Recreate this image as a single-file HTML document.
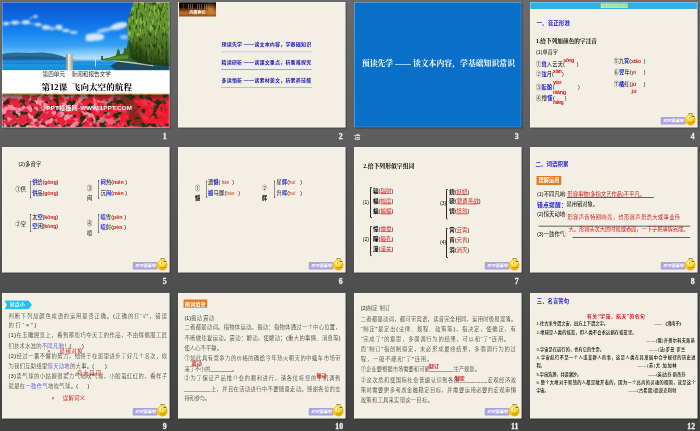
<!DOCTYPE html>
<html lang="zh-CN">
<head>
<meta charset="utf-8">
<title>飞向太空的航程 PPT</title>
<style>
html,body{margin:0;padding:0;}
body{width:700px;height:431px;overflow:hidden;position:relative;background:linear-gradient(to bottom,#6b6b6b 0%,#414141 100%);font-family:"Liberation Sans","Noto Sans CJK SC",sans-serif;}
.s{position:absolute;width:670px;height:502px;transform:scale(.25);transform-origin:0 0;overflow:hidden;box-shadow:3px 3px 4px rgba(0,0,0,.5);}
.s::after{content:"";position:absolute;left:0;top:0;right:0;bottom:0;box-shadow:inset 0 0 0 3px rgba(255,255,255,.38);}
.t{position:absolute;white-space:nowrap;line-height:1;font-weight:300;}
.b{font-weight:bold;}
.f{font-family:"Liberation Serif","Noto Serif CJK SC",serif;}
.r{color:#d01818;font-weight:400;}
.rb{color:#d01818;font-weight:bold;}
.u{color:#1616e4;font-weight:bold;}
.n{position:absolute;color:#f0f0f0;font:bold 31px/1 "Liberation Serif","Noto Serif CJK SC",serif;-webkit-text-stroke:1.2px #f0f0f0;transform:scale(.25);transform-origin:100% 0;white-space:nowrap;text-align:right;}
.br{position:absolute;border:4px solid #2a2a2a;border-right:none;border-radius:7px 0 0 7px;box-sizing:border-box;}
.ul{position:absolute;height:3.2px;background:#1a1a1a;}
.btn{position:absolute;left:523px;top:460px;width:99px;height:30px;background:#a9a0e2;border-radius:3px;color:#fff;font:italic bold 17px/30px "Liberation Sans","Noto Sans CJK SC",sans-serif;text-align:center;white-space:nowrap;letter-spacing:-0.5px;}
.sm{position:absolute;left:618px;top:441px;width:45px;height:54px;}
</style>
</head>
<body>
<div class="s" style="left:2px;top:2px;background:#ffffff">
<svg style="position:absolute;left:0;top:0" width="672" height="502" viewBox="2 2 168 125.5" preserveAspectRatio="none">
<defs>
<linearGradient id="sky" x1="0" y1="0" x2="0" y2="1"><stop offset="0" stop-color="#0a56d0"/><stop offset=".3" stop-color="#0e6ce4"/><stop offset=".55" stop-color="#1b88f0"/><stop offset=".75" stop-color="#38a2f4"/><stop offset=".88" stop-color="#74c2f7"/><stop offset="1" stop-color="#b0def9"/></linearGradient>
<radialGradient id="haze" cx=".5" cy="1" r=".9"><stop offset="0" stop-color="#f4fbff" stop-opacity=".95"/><stop offset=".55" stop-color="#d8eefc" stop-opacity=".55"/><stop offset="1" stop-color="#bfe2fa" stop-opacity="0"/></radialGradient>
<linearGradient id="lake" x1="0" y1="0" x2="0" y2="1"><stop offset="0" stop-color="#1782d6"/><stop offset=".45" stop-color="#2098e2"/><stop offset="1" stop-color="#1788d8"/></linearGradient>
<filter id="blur1" x="-.2" y="-.2" width="1.4" height="1.4"><feGaussianBlur stdDeviation=".9"/></filter>
<filter id="blur2" x="-.2" y="-.2" width="1.4" height="1.4"><feGaussianBlur stdDeviation=".5"/></filter>
<filter id="ftree" x="0" y="0" width="1" height="1" color-interpolation-filters="sRGB">
<feTurbulence type="fractalNoise" baseFrequency=".5 .16" numOctaves="2" seed="4" result="n"/>
<feColorMatrix in="n" type="matrix" values="0 0 0 0 .18  0 0 0 0 .32  0 0 0 0 .09  5 0 0 0 -2.5" result="d"/>
<feColorMatrix in="n" type="matrix" values="0 0 0 0 .58  0 0 0 0 .72  0 0 0 0 .26  0 5 0 0 -2.7" result="l"/>
<feMerge result="m"><feMergeNode in="SourceGraphic"/><feMergeNode in="d"/><feMergeNode in="l"/></feMerge>
<feComposite in="m" in2="SourceAlpha" operator="in"/>
</filter>
<filter id="fflow" x="0" y="0" width="1" height="1" color-interpolation-filters="sRGB">
<feTurbulence type="fractalNoise" baseFrequency=".15 .17" numOctaves="2" seed="7" result="n"/>
<feColorMatrix in="n" type="matrix" values="0 0 0 0 .12  0 0 0 0 .19  0 0 0 0 .07  9 0 0 0 -4.75" result="d"/>
<feMerge result="m"><feMergeNode in="SourceGraphic"/><feMergeNode in="d"/></feMerge>
<feComposite in="m" in2="SourceAlpha" operator="in"/>
</filter>
<filter id="fpink" x="0" y="0" width="1" height="1" color-interpolation-filters="sRGB">
<feTurbulence type="fractalNoise" baseFrequency=".14 .16" numOctaves="2" seed="23" result="n"/>
<feColorMatrix in="n" type="matrix" values="0 0 0 0 .98  0 0 0 0 .56  0 0 0 0 .66  0 9 0 0 -4.55" result="p"/>
<feTurbulence type="fractalNoise" baseFrequency=".5" numOctaves="1" seed="11" result="n2"/>
<feColorMatrix in="n2" type="matrix" values="0 0 0 0 1  0 0 0 0 .9  0 0 0 0 .92  0 0 10 0 -7" result="w"/>
<feMerge result="m"><feMergeNode in="p"/><feMergeNode in="w"/></feMerge>
<feComposite in="m" in2="SourceAlpha" operator="in"/>
</filter>
<linearGradient id="flbase" x1="0" y1="0" x2="1" y2="0"><stop offset="0" stop-color="#e02840"/><stop offset=".5" stop-color="#f01c34"/><stop offset="1" stop-color="#f4182c"/></linearGradient>
<linearGradient id="pm" x1="0" y1="0" x2="1" y2="0"><stop offset="0" stop-color="#fff"/><stop offset=".55" stop-color="#fff" stop-opacity=".9"/><stop offset=".75" stop-color="#fff" stop-opacity=".25"/><stop offset="1" stop-color="#fff" stop-opacity=".1"/></linearGradient>
<mask id="pmask" maskUnits="userSpaceOnUse" x="2" y="94" width="168" height="34"><rect x="2" y="94" width="168" height="34" fill="url(#pm)"/></mask>
<linearGradient id="fltop" x1="0" y1="0" x2="0" y2="1"><stop offset="0" stop-color="#1a2408" stop-opacity=".6"/><stop offset="1" stop-color="#1a2408" stop-opacity="0"/></linearGradient>
<linearGradient id="tsh" x1="0" y1="0" x2="0" y2="1"><stop offset="0" stop-color="#18300f" stop-opacity="0"/><stop offset="1" stop-color="#18300f" stop-opacity=".78"/></linearGradient>
</defs>
<!-- sky -->
<rect x="2" y="2" width="168" height="59" fill="url(#sky)"/>
<ellipse cx="100" cy="61" rx="62" ry="20" fill="url(#haze)"/>
<!-- clouds -->
<g fill="#fff" filter="url(#blur1)" opacity=".8">
<ellipse cx="6" cy="23.5" rx="3.2" ry="1.8"/><ellipse cx="15" cy="22.5" rx="3.8" ry="2"/><ellipse cx="26" cy="22.3" rx="4" ry="2.2"/>
<ellipse cx="35.5" cy="16.5" rx="2.2" ry="1.5"/><ellipse cx="31" cy="18" rx="2" ry="1" opacity=".6"/><ellipse cx="38" cy="24.5" rx="3" ry="1.8"/><ellipse cx="46" cy="27.5" rx="4" ry="2.2"/>
<ellipse cx="52" cy="29" rx="3" ry="1.2" opacity=".7"/><ellipse cx="59" cy="27.2" rx="3.4" ry="2.4"/><ellipse cx="66" cy="30.5" rx="3.6" ry="1.6"/><ellipse cx="74" cy="32.5" rx="3.6" ry="1.2"/>
<path d="M3 24 Q20 21 40 25 T76 33" stroke="#fff" stroke-width="1.6" fill="none" opacity=".55"/>
<ellipse cx="95" cy="37" rx="9.5" ry="3.8"/><ellipse cx="90" cy="39.5" rx="4.5" ry="1.8"/><ellipse cx="88.5" cy="36.5" rx="2.5" ry="2.5"/>
<ellipse cx="119" cy="26" rx="9" ry="3.4" transform="rotate(-14 119 26)"/><ellipse cx="105" cy="30" rx="9" ry="2" transform="rotate(-12 105 30)" opacity=".75"/>
<ellipse cx="124" cy="37" rx="4" ry="2" opacity=".7"/>
</g>
<!-- mountains -->
<path d="M2 54 L8 53 L18 52.4 L30 53 L42 52.6 L52 53.6 L60 55.5 L66 57.5 L72 59.5 L80 60.5 L2 60.5Z" fill="#2b6c96"/>
<path d="M2 57 L20 56 L40 56.5 L60 58 L74 60.5 L2 60.5Z" fill="#1f5c88" opacity=".8"/>
<!-- lake -->
<rect x="2" y="59.8" width="168" height="10.6" fill="url(#lake)"/>
<rect x="72" y="59.8" width="46" height="1.6" fill="#9ad4f4" opacity=".6"/>
<rect x="2" y="63" width="64" height="1.2" fill="#1170c4" opacity=".55"/>
<rect x="74" y="65.5" width="40" height="1.2" fill="#1170c4" opacity=".4"/>
<!-- post -->
<rect x="66.2" y="53.9" width="6.4" height="16.5" fill="#c9c9c2"/><rect x="66.2" y="53.9" width="1.3" height="16.5" fill="#8e8e88"/><rect x="68" y="53.9" width="1.8" height="16.5" fill="#e6e6e0"/><rect x="71.4" y="53.9" width="1.2" height="16.5" fill="#a2a29a"/>
<rect x="95" y="59" width=".9" height="7.5" fill="#e6f2fa" opacity=".85"/>
<!-- far shore & small trees -->
<path d="M100 60 L104 58.8 L110 57.5 L116 55.5 L117.3 50 L118.3 48.8 L119.3 50 L120.5 54.5 L123.5 53 L124.3 48.5 L125.3 47.5 L126.3 49 L127 46 L128 40.5 L129.2 39.8 L130.5 44 L132 48 L170 48 L170 66 L150 64.8 L134 62.2 L118 60.8 L106 60.6Z" fill="#35682a"/>
<path d="M104 59.4 L110 58 L116 56.4 L122 55.4 L128 55 L128 58.6 L116 59.6Z" fill="#5e9a38" opacity=".8"/>
<path d="M118 61.5 L136 63.5 L152 65.4 L170 65 L170 70.4 L116 70.4 L110 66Z" fill="#1d4450" opacity=".9"/>
<path d="M110 60.5 L120 60.8 L136 62.6 L153 65 L153 66.2 L136 64 L120 62Z" fill="#d2cbae"/>
<rect x="101.2" y="56" width="1.8" height="4" fill="#2f5a22"/>
<!-- big tree -->
<path d="M133 2 L170 2 L170 64 L150 63 L140 61 L134 58 L132 53 L131 47 L130 42 L128.4 38 L127.2 32 L127 26 L128 20 L130 13 L132 7Z" fill="#639430" filter="url(#ftree)"/>
<path d="M129 38 L170 26 L170 66 L150 64.8 L138 62.6 L131 58 L130 48Z" fill="url(#tsh)"/>
<path d="M129 42 L142 46 L150 64.8 L138 62.6 L131 58Z" fill="#16300e" opacity=".45" filter="url(#blur1)"/>
<!-- white band -->
<rect x="2" y="70.3" width="168" height="24" fill="#fff"/>
<rect x="2" y="93.6" width="168" height="1" fill="#e8a020"/>
<rect x="2" y="93.6" width="40" height="1" fill="#7aa030"/>
<!-- flowers -->
<rect x="2" y="94.5" width="168" height="33" fill="url(#flbase)" filter="url(#fflow)"/>
<g mask="url(#pmask)"><rect x="2" y="94.5" width="168" height="33" fill="#fff" filter="url(#fpink)"/></g>
<rect x="2" y="94.5" width="168" height="7" fill="url(#fltop)"/>
<path d="M118 94.5 L132 94.5 L146 127.5 L134 127.5Z" fill="#1c3010" opacity=".45" filter="url(#blur1)"/>
</svg>

<div class="t" style="left:162.4px;top:278.8px;font-size:22.4px;color:#2a2a2a;letter-spacing:0.16px;font-weight:400;">第四单元&nbsp;&nbsp;&nbsp;&nbsp;新闻和报告文学</div>
<div class="t b f" style="left:157.6px;top:323.8px;font-size:34.0px;color:#000;letter-spacing:0.42px;">第12课&nbsp;&nbsp;飞向太空的航程</div>
<div class="t b" style="left:152.0px;top:411.6px;font-size:24.8px;color:#fff;letter-spacing:0.63px;text-shadow:0 0 3px rgba(90,0,0,.6);">☆PPT模板网-WWW.1PPT.COM</div>
</div>
<div class="s" style="left:178px;top:2px;background:#f3efe4">
<div style="position:absolute;left:4px;top:0;width:148px;height:58px;background:linear-gradient(to bottom,#0a0604 0%,#1a0e06 38%,#7a3c10 55%,#c4702a 75%,#8a4a18 100%)"></div>
<div style="position:absolute;left:100px;top:0;width:52px;height:58px;background:radial-gradient(ellipse at 60% 50%,rgba(230,150,70,.85),rgba(120,60,20,0) 70%)"></div>
<div style="position:absolute;left:22px;top:8px;width:100px;height:20px;background:repeating-linear-gradient(to right,rgba(255,240,220,.55) 0,rgba(255,240,220,.55) 3px,rgba(0,0,0,0) 3px,rgba(0,0,0,0) 9px);opacity:.6"></div>
<div class="t b" style="left:46.0px;top:32.8px;font-size:16.0px;color:#fff;letter-spacing:0.10px;">内容索引</div>
<div class="t b" style="left:174.0px;top:159.6px;font-size:20.0px;color:#1818b0;letter-spacing:0.78px;">预读先学 ——读文本内容，学基础知识</div>
<div style="position:absolute;left:172.0px;top:198.6px;width:364.0px;height:2.8px;background:#7091d8;"></div>
<div class="t b" style="left:174.0px;top:231.2px;font-size:20.0px;color:#1818b0;letter-spacing:0.78px;">精读研析 ——读课文重点，析重难探究</div>
<div style="position:absolute;left:172.0px;top:267.8px;width:364.0px;height:2.8px;background:#7091d8;"></div>
<div class="t b" style="left:174.0px;top:302.4px;font-size:20.0px;color:#1818b0;letter-spacing:0.78px;">多读悟析 ——读素材美文，析素养技能</div>
<div style="position:absolute;left:172.0px;top:340.6px;width:364.0px;height:2.8px;background:#7091d8;"></div>
</div>
<div class="s" style="left:354px;top:2px;background:#0870c8">
<div class="t b f" style="left:31.2px;top:229.6px;font-size:31.2px;color:#fff;letter-spacing:0.22px;">预读先学 —— 读文本内容，学基础知识常识</div>
</div>
<div class="s" style="left:530px;top:2px;background:#f3efe4">
<div style="position:absolute;left:0.0px;top:0.0px;width:672.0px;height:28.0px;background:#30b0e8;"></div>
<div style="position:absolute;left:283.2px;top:6.4px;width:108.0px;height:17.2px;background:#d4f03c;"></div>
<div class="t b" style="left:288.0px;top:7.0px;font-size:16.4px;color:#7fd8f0;letter-spacing:0.14px;">课前知识积累</div>
<div class="t b" style="left:26.0px;top:74.4px;font-size:22.4px;color:#1a1ae0;letter-spacing:-0.06px;">一、音正形准</div>
<div class="t b f" style="left:24.0px;top:144.8px;font-size:22.4px;color:#000;letter-spacing:0.27px;">1.给下列加颜色的字注音</div>
<div class="t" style="left:24.0px;top:189.6px;font-size:20.8px;font-weight:400;letter-spacing:0.03px;">(1)单音字</div>
<div class="t" style="left:24.0px;top:238.0px;font-size:20.8px;font-weight:400;letter-spacing:0.86px;">①<span class="u">耸</span>入云天(&nbsp;&nbsp;&nbsp;&nbsp;&nbsp;&nbsp;&nbsp;)</div>
<div class="t b" style="left:133.2px;top:221.2px;font-size:21.6px;color:#d01818;letter-spacing:-2.50px;">sǒng</div>
<div class="t" style="left:24.0px;top:279.6px;font-size:20.8px;font-weight:400;letter-spacing:0.69px;">②<span class="u">弦</span>月(&nbsp;&nbsp;&nbsp;&nbsp;&nbsp;)</div>
<div class="t b" style="left:92.0px;top:268.0px;font-size:19.2px;color:#d01818;letter-spacing:-1.10px;">xián</div>
<div class="t" style="left:24.0px;top:328.8px;font-size:20.8px;font-weight:400;letter-spacing:1.37px;">③<span class="u">酝酿</span>(&nbsp;&nbsp;&nbsp;&nbsp;&nbsp;&nbsp;&nbsp;&nbsp;&nbsp;&nbsp;&nbsp;&nbsp;&nbsp;)</div>
<div class="t b" style="left:92.0px;top:308.8px;font-size:21.6px;color:#d01818;letter-spacing:-2.13px;">yùn</div>
<div class="t b" style="left:92.0px;top:348.0px;font-size:21.6px;color:#d01818;letter-spacing:-1.44px;">niàng</div>
<div class="t" style="left:24.0px;top:374.4px;font-size:20.8px;font-weight:400;letter-spacing:1.89px;">④懵<span class="u">懂</span>(&nbsp;&nbsp;&nbsp;&nbsp;&nbsp;)</div>
<div class="t b" style="left:92.0px;top:391.2px;font-size:19.2px;color:#d01818;letter-spacing:-2.80px;">měng</div>
<div class="t" style="left:335.2px;top:225.6px;font-size:20.8px;font-weight:400;letter-spacing:-0.24px;">⑤九<span class="u">霄</span>(<b class="rb">xiāo</b>&nbsp;&nbsp;)</div>
<div class="t" style="left:335.2px;top:271.6px;font-size:20.8px;font-weight:400;letter-spacing:0.36px;">⑥<span class="u">翌</span>年(<b class="rb">yì</b>&nbsp;&nbsp;&nbsp;&nbsp;&nbsp;)</div>
<div class="t" style="left:335.2px;top:317.6px;font-size:20.8px;font-weight:400;letter-spacing:0.26px;">⑦<span class="u">橘</span>红(<b class="rb">jú</b>&nbsp;&nbsp;&nbsp;&nbsp;&nbsp;)</div>
<div class="t b" style="left:405.6px;top:346.4px;font-size:21.6px;color:#d01818;letter-spacing:1.60px;">jú</div>
<div class="btn">对对答案吧</div>
<svg class="sm" viewBox="0 0 46 56" preserveAspectRatio="none"><defs><radialGradient id="g3" cx="42%" cy="38%" r="68%"><stop offset="0" stop-color="#fff45e"/><stop offset=".55" stop-color="#fbd010"/><stop offset="1" stop-color="#e58e00"/></radialGradient></defs><ellipse cx="24" cy="31" rx="21" ry="24" fill="url(#g3)"/><path d="M15 8 Q20 1 26 5 Q32 1 36 9 Q26 4 15 8Z" fill="#7a5a00"/><ellipse cx="19" cy="23" rx="6.5" ry="5.5" fill="#fff"/><ellipse cx="33" cy="22" rx="4.5" ry="4" fill="#fff8c0"/><circle cx="21" cy="24" r="2.4" fill="#333"/><path d="M28 19 L40 17" stroke="#4a3000" stroke-width="3"/><path d="M14 41 Q25 49 36 38" stroke="#b05a00" stroke-width="2.5" fill="none"/><ellipse cx="5" cy="40" rx="6" ry="5" fill="#f6c40c"/></svg>
</div>
<div class="s" style="left:2px;top:147.3px;background:#f3efe4">
<div class="t" style="left:65.6px;top:56.4px;font-size:21.6px;font-weight:400;letter-spacing:0.07px;">(2)多音字</div>
<div class="t" style="left:53.6px;top:156.2px;font-size:21.2px;font-weight:400;letter-spacing:0.00px;">①供</div>
<div class="br" style="left:110.4px;top:134.0px;width:8.0px;height:72.0px"></div>
<div class="t" style="left:120.8px;top:130.6px;font-size:21.2px;font-weight:400;letter-spacing:-0.54px;"><span class="u">供</span>给(<b class="rb">gōng</b>)</div>
<div class="t" style="left:120.8px;top:172.2px;font-size:21.2px;font-weight:400;letter-spacing:-0.54px;"><span class="u">供</span>品(<b class="rb">gòng</b>)</div>
<div class="t" style="left:53.6px;top:297.0px;font-size:21.2px;font-weight:400;letter-spacing:0.00px;">②空</div>
<div class="br" style="left:110.4px;top:266.8px;width:8.0px;height:72.8px"></div>
<div class="t" style="left:120.8px;top:268.2px;font-size:21.2px;font-weight:400;letter-spacing:-0.49px;">太<span class="u">空</span>(<b class="rb">kōng</b>)</div>
<div class="t" style="left:120.8px;top:307.4px;font-size:21.2px;font-weight:400;letter-spacing:-0.49px;"><span class="u">空</span>闲(<b class="rb">kòng</b>)</div>
<div class="t" style="left:340.0px;top:155.0px;font-size:21.2px;font-weight:400;">③</div>
<div class="t" style="left:340.0px;top:194.2px;font-size:21.2px;font-weight:400;">闷</div>
<div class="br" style="left:382.4px;top:131.6px;width:8.0px;height:76.8px"></div>
<div class="t" style="left:394.4px;top:131.4px;font-size:21.2px;font-weight:400;letter-spacing:-0.05px;"><span class="u">闷</span>热(<b class="rb">mēn</b>&nbsp;)</div>
<div class="t" style="left:394.4px;top:173.0px;font-size:21.2px;font-weight:400;letter-spacing:-0.05px;">沉<span class="u">闷</span>(<b class="rb">mèn</b>&nbsp;)</div>
<div class="t" style="left:340.0px;top:294.2px;font-size:21.2px;font-weight:400;">④</div>
<div class="t" style="left:340.0px;top:333.0px;font-size:21.2px;font-weight:400;">喷</div>
<div class="br" style="left:382.4px;top:267.6px;width:8.0px;height:76.8px"></div>
<div class="t" style="left:393.6px;top:269.4px;font-size:21.2px;font-weight:400;letter-spacing:0.29px;"><span class="u">喷</span>雪(<b class="rb">pēn</b>&nbsp;)</div>
<div class="t" style="left:393.6px;top:308.2px;font-size:21.2px;font-weight:400;letter-spacing:0.29px;"><span class="u">喷</span>射(<b class="rb">pèn</b>&nbsp;)</div>
<div class="btn">对对答案吧</div>
<svg class="sm" viewBox="0 0 46 56" preserveAspectRatio="none"><defs><radialGradient id="g4" cx="42%" cy="38%" r="68%"><stop offset="0" stop-color="#fff45e"/><stop offset=".55" stop-color="#fbd010"/><stop offset="1" stop-color="#e58e00"/></radialGradient></defs><ellipse cx="24" cy="31" rx="21" ry="24" fill="url(#g4)"/><path d="M15 8 Q20 1 26 5 Q32 1 36 9 Q26 4 15 8Z" fill="#7a5a00"/><ellipse cx="19" cy="23" rx="6.5" ry="5.5" fill="#fff"/><ellipse cx="33" cy="22" rx="4.5" ry="4" fill="#fff8c0"/><circle cx="21" cy="24" r="2.4" fill="#333"/><path d="M28 19 L40 17" stroke="#4a3000" stroke-width="3"/><path d="M14 41 Q25 49 36 38" stroke="#b05a00" stroke-width="2.5" fill="none"/><ellipse cx="5" cy="40" rx="6" ry="5" fill="#f6c40c"/></svg>
</div>
<div class="s" style="left:178px;top:147.3px;background:#f3efe4">
<div class="t" style="left:68.0px;top:155.2px;font-size:20.8px;font-weight:400;">①</div>
<div class="t b" style="left:68.0px;top:194.4px;font-size:20.8px;">憾</div>
<div class="br" style="left:109.6px;top:133.2px;width:8.0px;height:71.2px"></div>
<div class="t" style="left:120.0px;top:131.6px;font-size:20.8px;font-weight:400;letter-spacing:0.17px;">遗<span class="u">憾</span>(&nbsp;<span class="r" style="font-size:.85em">hàn</span>&nbsp;&nbsp;)</div>
<div class="t" style="left:120.0px;top:173.2px;font-size:20.8px;font-weight:400;letter-spacing:1.23px;"><span class="u">撼</span>马脚(<span class="r" style="font-size:.85em">hàn</span>&nbsp;&nbsp;)</div>
<div class="t" style="left:336.0px;top:155.2px;font-size:20.8px;font-weight:400;">②</div>
<div class="t b" style="left:336.0px;top:194.4px;font-size:20.8px;">辉</div>
<div class="br" style="left:382.4px;top:133.2px;width:8.0px;height:71.2px"></div>
<div class="t" style="left:394.4px;top:131.6px;font-size:20.8px;font-weight:400;letter-spacing:0.42px;">星<span class="u">辉</span>(<span class="r" style="font-size:.85em">huī</span>&nbsp;&nbsp;&nbsp;)</div>
<div class="t" style="left:394.4px;top:173.2px;font-size:20.8px;font-weight:400;letter-spacing:0.42px;">升<span class="u">晖</span>(<span class="r" style="font-size:.85em">huī</span>&nbsp;&nbsp;&nbsp;)</div>
<div class="btn">对对答案吧</div>
<svg class="sm" viewBox="0 0 46 56" preserveAspectRatio="none"><defs><radialGradient id="g5" cx="42%" cy="38%" r="68%"><stop offset="0" stop-color="#fff45e"/><stop offset=".55" stop-color="#fbd010"/><stop offset="1" stop-color="#e58e00"/></radialGradient></defs><ellipse cx="24" cy="31" rx="21" ry="24" fill="url(#g5)"/><path d="M15 8 Q20 1 26 5 Q32 1 36 9 Q26 4 15 8Z" fill="#7a5a00"/><ellipse cx="19" cy="23" rx="6.5" ry="5.5" fill="#fff"/><ellipse cx="33" cy="22" rx="4.5" ry="4" fill="#fff8c0"/><circle cx="21" cy="24" r="2.4" fill="#333"/><path d="M28 19 L40 17" stroke="#4a3000" stroke-width="3"/><path d="M14 41 Q25 49 36 38" stroke="#b05a00" stroke-width="2.5" fill="none"/><ellipse cx="5" cy="40" rx="6" ry="5" fill="#f6c40c"/></svg>
</div>
<div class="s" style="left:354px;top:147.3px;background:#f3efe4">
<div class="t b f" style="left:36.8px;top:63.2px;font-size:23.2px;color:#000;letter-spacing:0.19px;">2.给下列形似字组词</div>
<div class="t" style="left:35.2px;top:210.0px;font-size:20.0px;font-weight:400;">(1)</div>
<div class="br" style="left:64.0px;top:160.4px;width:8.0px;height:124.8px"></div>
<div class="t" style="left:76.0px;top:165.8px;font-size:22.0px;font-weight:400;letter-spacing:0.10px;"><b>辐</b>(<span class="r"><u>辐射</u></span>)</div>
<div class="t" style="left:76.0px;top:206.6px;font-size:22.0px;font-weight:400;letter-spacing:0.10px;"><b>幅</b>(<span class="r"><u>幅度</u></span>)</div>
<div class="t" style="left:76.0px;top:247.4px;font-size:22.0px;font-weight:400;letter-spacing:0.10px;"><b>蝠</b>(<span class="r"><u>蝙蝠</u></span>)</div>
<div class="t" style="left:35.2px;top:359.6px;font-size:20.0px;font-weight:400;">(2)</div>
<div class="br" style="left:64.0px;top:316.4px;width:8.0px;height:121.6px"></div>
<div class="t" style="left:76.0px;top:316.6px;font-size:22.0px;font-weight:400;letter-spacing:0.10px;"><b>憧</b>(<span class="r"><u>憧憬</u></span>)</div>
<div class="t" style="left:76.0px;top:355.8px;font-size:22.0px;font-weight:400;letter-spacing:0.10px;"><b>瞳</b>(<span class="r"><u>瞳孔</u></span>)</div>
<div class="t" style="left:76.0px;top:396.6px;font-size:22.0px;font-weight:400;letter-spacing:0.10px;"><b>潼</b>(<span class="r"><u>潼关</u></span>)</div>
<div class="t" style="left:344.0px;top:215.6px;font-size:20.0px;font-weight:400;">(3)</div>
<div class="br" style="left:368.4px;top:168.0px;width:8.0px;height:122.8px"></div>
<div class="t" style="left:381.2px;top:167.8px;font-size:22.0px;font-weight:400;letter-spacing:-0.14px;"><b>娆</b>(<span class="r"><u>妖娆</u></span>)</div>
<div class="t" style="left:381.2px;top:207.4px;font-size:22.0px;font-weight:400;letter-spacing:0.02px;"><b>骁</b>(<span class="r"><u>骁勇善战</u></span>)</div>
<div class="t" style="left:381.2px;top:247.4px;font-size:22.0px;font-weight:400;letter-spacing:-0.14px;"><b>饶</b>(<span class="r"><u>饶恕</u></span>)</div>
<div class="t" style="left:344.0px;top:368.8px;font-size:20.0px;font-weight:400;">(4)</div>
<div class="br" style="left:368.4px;top:322.4px;width:8.0px;height:122.8px"></div>
<div class="t" style="left:381.2px;top:319.8px;font-size:22.0px;font-weight:400;letter-spacing:-0.14px;"><b>霄</b>(<span class="r">云霄</span>)</div>
<div class="t" style="left:381.2px;top:359.8px;font-size:22.0px;font-weight:400;letter-spacing:-0.14px;"><b>宵</b>(<span class="r">元宵</span>)</div>
<div class="t" style="left:381.2px;top:400.2px;font-size:22.0px;font-weight:400;letter-spacing:-0.14px;"><b>消</b>(<span class="r">消灭</span>)</div>
<div class="btn">对对答案吧</div>
<svg class="sm" viewBox="0 0 46 56" preserveAspectRatio="none"><defs><radialGradient id="g6" cx="42%" cy="38%" r="68%"><stop offset="0" stop-color="#fff45e"/><stop offset=".55" stop-color="#fbd010"/><stop offset="1" stop-color="#e58e00"/></radialGradient></defs><ellipse cx="24" cy="31" rx="21" ry="24" fill="url(#g6)"/><path d="M15 8 Q20 1 26 5 Q32 1 36 9 Q26 4 15 8Z" fill="#7a5a00"/><ellipse cx="19" cy="23" rx="6.5" ry="5.5" fill="#fff"/><ellipse cx="33" cy="22" rx="4.5" ry="4" fill="#fff8c0"/><circle cx="21" cy="24" r="2.4" fill="#333"/><path d="M28 19 L40 17" stroke="#4a3000" stroke-width="3"/><path d="M14 41 Q25 49 36 38" stroke="#b05a00" stroke-width="2.5" fill="none"/><ellipse cx="5" cy="40" rx="6" ry="5" fill="#f6c40c"/></svg>
</div>
<div class="s" style="left:530px;top:147.3px;background:#f3efe4">
<div class="t b" style="left:21.6px;top:57.4px;font-size:22.0px;color:#1a1ae0;letter-spacing:0.06px;">二、词语积累</div>
<div style="position:absolute;left:26.4px;top:115.6px;width:98.8px;height:36.8px;background:#e87a1e;border-radius:2px;"></div>
<div class="t b" style="left:33.6px;top:123.6px;font-size:20.8px;color:#fff;letter-spacing:0.30px;">理解运用</div>
<div class="t" style="left:28.0px;top:178.6px;font-size:21.2px;font-weight:400;letter-spacing:0.33px;">(1)不同凡响:</div>
<div class="t" style="left:149.6px;top:178.6px;font-size:21.2px;color:#d01818;font-weight:400;letter-spacing:-0.02px;">形容事物(多指文艺作品)不平凡。</div>
<div class="ul" style="left:148.0px;top:199.6px;width:346.8px;background:#333"></div>
<div class="t b" style="left:28.0px;top:218.8px;font-size:23.2px;color:#1a1ae0;letter-spacing:0.81px;">错点提醒：</div>
<div class="t" style="left:146.0px;top:217.8px;font-size:21.2px;font-weight:400;letter-spacing:-0.19px;">易用错对象。</div>
<div class="t" style="left:28.0px;top:256.2px;font-size:21.2px;font-weight:400;letter-spacing:0.33px;">(2)惊天动地:</div>
<div class="t" style="left:149.6px;top:270.6px;font-size:21.2px;color:#d01818;font-weight:400;letter-spacing:1.43px;">形容声音特别响亮，也形容声势浩大或事业伟</div>
<div class="ul" style="left:34.0px;top:314.8px;width:607.2px;background:#333"></div>
<div class="t" style="left:154.0px;top:319.4px;font-size:21.2px;color:#d01818;font-weight:400;letter-spacing:-0.32px;">大。形容头次大的时候或者面，一下子把事情完成。</div>
<div class="t" style="left:28.0px;top:338.6px;font-size:21.2px;font-weight:400;letter-spacing:0.33px;">(3)一鼓作气:</div>
<div class="ul" style="left:170.0px;top:359.6px;width:471.2px;background:#333"></div>
<div class="btn">对对答案吧</div>
<svg class="sm" viewBox="0 0 46 56" preserveAspectRatio="none"><defs><radialGradient id="g7" cx="42%" cy="38%" r="68%"><stop offset="0" stop-color="#fff45e"/><stop offset=".55" stop-color="#fbd010"/><stop offset="1" stop-color="#e58e00"/></radialGradient></defs><ellipse cx="24" cy="31" rx="21" ry="24" fill="url(#g7)"/><path d="M15 8 Q20 1 26 5 Q32 1 36 9 Q26 4 15 8Z" fill="#7a5a00"/><ellipse cx="19" cy="23" rx="6.5" ry="5.5" fill="#fff"/><ellipse cx="33" cy="22" rx="4.5" ry="4" fill="#fff8c0"/><circle cx="21" cy="24" r="2.4" fill="#333"/><path d="M28 19 L40 17" stroke="#4a3000" stroke-width="3"/><path d="M14 41 Q25 49 36 38" stroke="#b05a00" stroke-width="2.5" fill="none"/><ellipse cx="5" cy="40" rx="6" ry="5" fill="#f6c40c"/></svg>
</div>
<div class="s" style="left:2px;top:292.6px;background:#f3efe4">
<div style="position:absolute;left:10px;top:29px;width:110px;height:37px;background:#22bdf2;clip-path:polygon(0 0,86% 0,100% 50%,86% 100%,0 100%,9% 50%)"></div>
<div class="t b" style="left:30.8px;top:35.6px;font-size:20.0px;color:#fff;letter-spacing:-0.13px;">对点小</div>
<div class="t" style="left:26.0px;top:81.0px;font-size:21.2px;color:#151515;letter-spacing:3.40px;">判断下列加颜色成语的运用是否正确。(正确的打“√”，错误</div>
<div class="t" style="left:26.0px;top:119.0px;font-size:21.2px;color:#151515;letter-spacing:7.01px;">的打“×”)</div>
<div class="t" style="left:26.0px;top:159.0px;font-size:21.2px;color:#151515;letter-spacing:2.06px;">(1)在玉雕展览上，看到那些巧夺天工的作品，不由得佩服工匠</div>
<div class="t" style="left:26.0px;top:200.2px;font-size:21.2px;color:#151515;letter-spacing:1.02px;">们技术水准的<span style="color:#1616e4">不同凡响</span>！(&nbsp;&nbsp;&nbsp;&nbsp;&nbsp;&nbsp;)</div>
<div class="t" style="left:181.2px;top:220.6px;font-size:21.2px;color:#d01818;font-weight:400;letter-spacing:2.55px;">×&nbsp;&nbsp;&nbsp;&nbsp;易错对象</div>
<div class="t" style="left:26.0px;top:240.6px;font-size:21.2px;color:#151515;letter-spacing:2.06px;">(2)经过一番不懈的努力，他终于在班里进步了好几个名次，成</div>
<div class="t" style="left:26.0px;top:279.8px;font-size:21.2px;color:#151515;letter-spacing:1.16px;">为我们互助组里<span style="color:#1616e4">惊天动地</span>的大事。(&nbsp;&nbsp;&nbsp;&nbsp;&nbsp;&nbsp;)</div>
<div class="t" style="left:257.2px;top:310.6px;font-size:21.2px;color:#d01818;font-weight:400;letter-spacing:3.30px;">×&nbsp;&nbsp;&nbsp;夸大其词</div>
<div class="t" style="left:26.0px;top:320.6px;font-size:21.2px;color:#151515;letter-spacing:2.06px;">(3)卖气球的小姑娘很卖力气地吹气球，小脸蛋红红的，看样子</div>
<div class="t" style="left:26.0px;top:361.0px;font-size:21.2px;color:#151515;letter-spacing:1.42px;">就是在<span style="color:#1616e4">一鼓作气</span>地吹气球。(&nbsp;&nbsp;&nbsp;&nbsp;&nbsp;)</div>
<div class="t" style="left:198.0px;top:410.2px;font-size:21.2px;color:#d01818;font-weight:400;letter-spacing:1.75px;">×&nbsp;&nbsp;&nbsp;&nbsp;误解词义</div>
<div class="btn">对对答案吧</div>
<svg class="sm" viewBox="0 0 46 56" preserveAspectRatio="none"><defs><radialGradient id="g8" cx="42%" cy="38%" r="68%"><stop offset="0" stop-color="#fff45e"/><stop offset=".55" stop-color="#fbd010"/><stop offset="1" stop-color="#e58e00"/></radialGradient></defs><ellipse cx="24" cy="31" rx="21" ry="24" fill="url(#g8)"/><path d="M15 8 Q20 1 26 5 Q32 1 36 9 Q26 4 15 8Z" fill="#7a5a00"/><ellipse cx="19" cy="23" rx="6.5" ry="5.5" fill="#fff"/><ellipse cx="33" cy="22" rx="4.5" ry="4" fill="#fff8c0"/><circle cx="21" cy="24" r="2.4" fill="#333"/><path d="M28 19 L40 17" stroke="#4a3000" stroke-width="3"/><path d="M14 41 Q25 49 36 38" stroke="#b05a00" stroke-width="2.5" fill="none"/><ellipse cx="5" cy="40" rx="6" ry="5" fill="#f6c40c"/></svg>
</div>
<div class="s" style="left:178px;top:292.6px;background:#f3efe4">
<div style="position:absolute;left:22.0px;top:26.4px;width:94.8px;height:32.4px;background:#e87a1e;border-radius:2px;"></div>
<div class="t b" style="left:28.0px;top:32.8px;font-size:20.0px;color:#fff;letter-spacing:0.70px;">辨词填空</div>
<div class="t" style="left:26.0px;top:88.6px;font-size:21.2px;color:#151515;letter-spacing:0.18px;">(1)振动 震动</div>
<div class="t" style="left:26.0px;top:127.4px;font-size:21.2px;color:#151515;letter-spacing:1.17px;">二者都是动词。指物体运动。振动：指物体通过一个中心位置，</div>
<div class="t" style="left:26.0px;top:167.8px;font-size:21.2px;color:#151515;letter-spacing:1.37px;">不断做往复运动。震动：颤动，使颤动；(重大的事情、消息等)</div>
<div class="t" style="left:26.0px;top:211.0px;font-size:21.2px;color:#151515;letter-spacing:0.24px;">使人心不平静。</div>
<div class="t" style="left:26.0px;top:247.8px;font-size:21.2px;color:#151515;letter-spacing:2.00px;">①如此具有竞争力的价格的确给今年热火朝天的中级车市场带</div>
<div class="t" style="left:26.0px;top:291.8px;font-size:21.2px;color:#151515;letter-spacing:-0.81px;">来了不小的________。</div>
<div class="t b" style="left:54.4px;top:270.8px;font-size:20.0px;color:#d01818;letter-spacing:0.80px;">震动</div>
<div class="t" style="left:26.0px;top:329.8px;font-size:21.2px;color:#151515;letter-spacing:2.89px;">②为了保证产品推介会的顺利进行，请各位将您的手机调到</div>
<div class="t b" style="left:555.2px;top:319.6px;font-size:19.2px;color:#d01818;letter-spacing:0.41px;">振动</div>
<div class="t" style="left:26.0px;top:373.8px;font-size:21.2px;color:#151515;letter-spacing:1.43px;">________上，并且在活动进行中不要随意走动。感谢各位的支</div>
<div class="t" style="left:26.0px;top:410.6px;font-size:21.2px;color:#151515;letter-spacing:-0.79px;">持和参与。</div>
<div class="btn">对对答案吧</div>
<svg class="sm" viewBox="0 0 46 56" preserveAspectRatio="none"><defs><radialGradient id="g9" cx="42%" cy="38%" r="68%"><stop offset="0" stop-color="#fff45e"/><stop offset=".55" stop-color="#fbd010"/><stop offset="1" stop-color="#e58e00"/></radialGradient></defs><ellipse cx="24" cy="31" rx="21" ry="24" fill="url(#g9)"/><path d="M15 8 Q20 1 26 5 Q32 1 36 9 Q26 4 15 8Z" fill="#7a5a00"/><ellipse cx="19" cy="23" rx="6.5" ry="5.5" fill="#fff"/><ellipse cx="33" cy="22" rx="4.5" ry="4" fill="#fff8c0"/><circle cx="21" cy="24" r="2.4" fill="#333"/><path d="M28 19 L40 17" stroke="#4a3000" stroke-width="3"/><path d="M14 41 Q25 49 36 38" stroke="#b05a00" stroke-width="2.5" fill="none"/><ellipse cx="5" cy="40" rx="6" ry="5" fill="#f6c40c"/></svg>
</div>
<div class="s" style="left:354px;top:292.6px;background:#f3efe4">
<div class="t" style="left:27.2px;top:51.0px;font-size:21.2px;color:#151515;letter-spacing:0.03px;">(2)制定 制订</div>
<div class="t" style="left:27.2px;top:92.2px;font-size:21.2px;color:#151515;letter-spacing:1.07px;">二者都是动词，都可带宾语，读音完全相同，运用时极易混淆。</div>
<div class="t" style="left:27.2px;top:132.2px;font-size:21.2px;color:#151515;letter-spacing:3.09px;">“制定”是定出(法律、规程、政策等)，指决定，使确定，有</div>
<div class="t" style="left:27.2px;top:173.4px;font-size:21.2px;color:#151515;letter-spacing:3.01px;">“完成了”的意思，多强调行为的结果，可以和“了”连用。</div>
<div class="t" style="left:27.2px;top:212.2px;font-size:21.2px;color:#151515;letter-spacing:2.94px;">而“制订”指创制拟定，未必形成最终结果，多强调行为的过</div>
<div class="t" style="left:27.2px;top:253.0px;font-size:21.2px;color:#151515;letter-spacing:3.20px;">程，一般不能和“了”连用。</div>
<div class="t" style="left:27.2px;top:293.4px;font-size:21.2px;color:#151515;letter-spacing:0.04px;">①企业要根据市场需要和可能________生产规划。</div>
<div class="t b" style="left:299.2px;top:282.0px;font-size:20.0px;color:#d01818;letter-spacing:0.40px;">制订</div>
<div class="t" style="left:27.2px;top:337.4px;font-size:21.2px;color:#151515;letter-spacing:2.09px;">②这次危机使国际社会普遍认识到各国________宏观经济政</div>
<div class="t b" style="left:402.8px;top:331.2px;font-size:20.0px;color:#d01818;letter-spacing:-0.20px;">制定</div>
<div class="t" style="left:27.2px;top:376.2px;font-size:21.2px;color:#151515;letter-spacing:1.89px;">策时需要更多考虑金融稳定目标，并需要运用必要的宏观审慎</div>
<div class="t" style="left:27.2px;top:417.0px;font-size:21.2px;color:#151515;letter-spacing:1.03px;">政策和工具来实现这一目标。</div>
<div class="btn">对对答案吧</div>
<svg class="sm" viewBox="0 0 46 56" preserveAspectRatio="none"><defs><radialGradient id="g10" cx="42%" cy="38%" r="68%"><stop offset="0" stop-color="#fff45e"/><stop offset=".55" stop-color="#fbd010"/><stop offset="1" stop-color="#e58e00"/></radialGradient></defs><ellipse cx="24" cy="31" rx="21" ry="24" fill="url(#g10)"/><path d="M15 8 Q20 1 26 5 Q32 1 36 9 Q26 4 15 8Z" fill="#7a5a00"/><ellipse cx="19" cy="23" rx="6.5" ry="5.5" fill="#fff"/><ellipse cx="33" cy="22" rx="4.5" ry="4" fill="#fff8c0"/><circle cx="21" cy="24" r="2.4" fill="#333"/><path d="M28 19 L40 17" stroke="#4a3000" stroke-width="3"/><path d="M14 41 Q25 49 36 38" stroke="#b05a00" stroke-width="2.5" fill="none"/><ellipse cx="5" cy="40" rx="6" ry="5" fill="#f6c40c"/></svg>
</div>
<div class="s" style="left:530px;top:292.6px;background:#f3efe4">
<div class="t b" style="left:27.2px;top:19.6px;font-size:21.6px;color:#1a1ae0;letter-spacing:-0.13px;">三、名言警句</div>
<div class="t b" style="left:228.0px;top:83.2px;font-size:19.2px;color:#d01818;letter-spacing:1.84px;">有关“宇宙、航天”的名句</div>
<div class="t" style="left:25.6px;top:114.8px;font-size:16.8px;letter-spacing:0.22px;font-weight:500;">1.往古来今谓之宙，四方上下谓之宇。</div>
<div class="t" style="left:497.2px;top:114.8px;font-size:16.8px;letter-spacing:-0.72px;font-weight:500;">—— 《淮南子》</div>
<div class="t" style="left:25.6px;top:150.8px;font-size:16.8px;letter-spacing:0.75px;font-weight:500;">2.地球是人类的摇篮，但人类不会永远躺在摇篮里。</div>
<div class="t" style="left:466.4px;top:184.4px;font-size:16.8px;letter-spacing:1.35px;font-weight:500;">——(俄)齐奥尔科夫斯基</div>
<div class="t" style="left:25.6px;top:217.2px;font-size:16.8px;letter-spacing:0.28px;font-weight:500;">3.宇宙是在运行的，也有它的生命。</div>
<div class="t" style="left:476.0px;top:217.2px;font-size:16.8px;letter-spacing:1.14px;font-weight:500;">——(法)罗曼·罗兰</div>
<div class="t" style="left:25.6px;top:249.6px;font-size:16.8px;letter-spacing:2.02px;font-weight:500;">4.宇宙航行不是一个人或某群人的事，这是人类在其发展中合乎规律的历史进</div>
<div class="t" style="left:25.6px;top:283.6px;font-size:16.8px;letter-spacing:-0.39px;font-weight:500;">程。</div>
<div class="t" style="left:429.6px;top:283.6px;font-size:16.8px;letter-spacing:2.42px;font-weight:500;">——(苏)尤·加加林</div>
<div class="t" style="left:25.6px;top:317.2px;font-size:16.8px;letter-spacing:-0.28px;font-weight:500;">5.宇宙浩渺，共谱潮汐。</div>
<div class="t" style="left:471.2px;top:318.0px;font-size:16.8px;letter-spacing:-0.06px;font-weight:500;">——(英)达芬·斯蒂芬</div>
<div class="t" style="left:25.6px;top:350.0px;font-size:16.8px;letter-spacing:1.50px;font-weight:500;">6.整个大地对于智慧的人都是敞开着的，因为一个高尚的灵魂的祖国，就是这个</div>
<div class="t" style="left:25.6px;top:383.6px;font-size:16.8px;letter-spacing:-1.32px;font-weight:500;">宇宙。</div>
<div class="t" style="left:393.2px;top:383.6px;font-size:16.8px;letter-spacing:1.28px;font-weight:500;">——(古希腊)德谟克利特</div>
</div>
<div class="n" style="right:533.4px;top:131.5px">1</div>
<div class="n" style="right:357.4px;top:131.5px">2</div>
<div class="n" style="right:181.4px;top:131.5px">3</div>
<div class="n" style="right:5.4px;top:131.5px">4</div>
<div class="n" style="right:533.4px;top:276.8px">5</div>
<div class="n" style="right:357.4px;top:276.8px">6</div>
<div class="n" style="right:181.4px;top:276.8px">7</div>
<div class="n" style="right:5.4px;top:276.8px">8</div>
<div class="n" style="right:533.4px;top:422.1px">9</div>
<div class="n" style="right:357.4px;top:422.1px">10</div>
<div class="n" style="right:181.4px;top:422.1px">11</div>
<div class="n" style="right:5.4px;top:422.1px">12</div>
<div style="position:absolute;left:353.5px;top:133.5px;width:7px;height:6px;overflow:hidden"><div style="transform:scale(.25);transform-origin:0 0;color:#eee;font:bold 26px/24px 'Liberation Sans','Noto Sans CJK SC',sans-serif;white-space:nowrap">洽</div></div>
</body>
</html>
